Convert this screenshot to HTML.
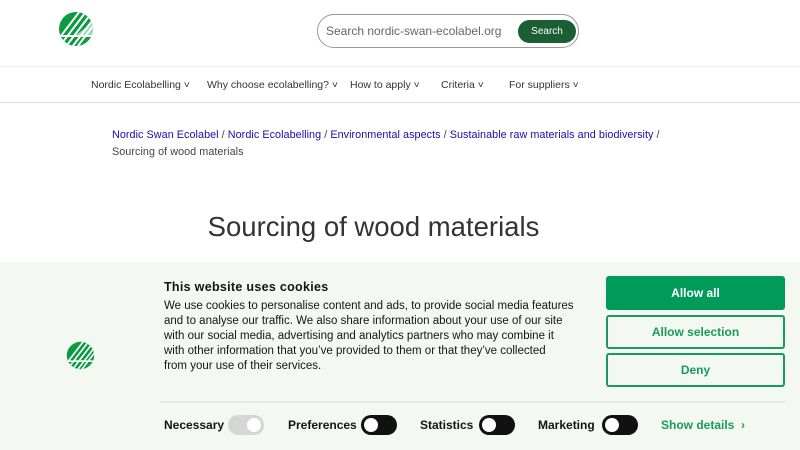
<!DOCTYPE html>
<html><head><meta charset="utf-8"><style>
*{box-sizing:border-box;margin:0;padding:0}
body{width:800px;height:450px;overflow:hidden;background:#fff;font-family:"Liberation Sans",sans-serif;position:relative}
.logo{position:absolute}
.search{position:absolute;left:317px;top:14px;width:262px;height:34px;border:1px solid #999;border-radius:17px}
.search span{position:absolute;left:8px;top:9px;font-size:12px;color:#666}
.search b{position:absolute;right:2px;top:5px;width:58px;height:23px;border-radius:12px;background:#1b5e34;color:#fff;font-weight:normal;font-size:10px;text-align:center;line-height:23px}
.nav{position:absolute;top:66px;left:0;width:800px;height:37px;border-top:1px solid #eee;border-bottom:1px solid #ddd;font-size:10.5px;color:#333}
.nav span{position:absolute;top:12px}
.bc{position:absolute;left:112px;top:127px;font-size:10.8px;line-height:17px;color:#444;width:620px;white-space:nowrap;letter-spacing:.05px}
.bc a{color:#1a0dab;text-decoration:none}
h1{position:absolute;left:0;width:747px;text-align:center;top:211px;font-size:27.5px;font-weight:normal;color:#333}
.ban{position:absolute;left:0;top:262px;width:800px;height:188px;background:#f3f8f2;color:#141414}
.t{position:absolute;left:164px;top:18px;font-size:12.5px;font-weight:bold;letter-spacing:.3px}
.p{position:absolute;left:164px;top:37px;font-size:11.5px;line-height:15px;white-space:nowrap}
.btn{position:absolute;left:606px;width:179px;height:34px;border:2px solid #1a9a5c;border-radius:3px;color:#1a9a5c;font-weight:bold;font-size:12px;text-align:center;line-height:30px}
.hr{position:absolute;left:160px;top:139px;width:625px;border-top:2px solid #e6ebe5}
.lbl{position:absolute;top:156px;font-size:12px;font-weight:bold}
.tg{position:absolute;top:153px;width:36px;height:20px;border-radius:10px;background:#111}
.tg::after{content:"";position:absolute;left:3px;top:3px;width:14px;height:14px;border-radius:50%;background:#fff}
.tg.n{background:#d6d6d6}.tg.n::after{left:19px}
</style></head><body>
<svg class="logo" style="left:58px;top:11px" width="36" height="36" viewBox="0 0 36 36"><defs><clipPath id="c"><circle cx="18" cy="18" r="17"/></clipPath></defs><g clip-path="url(#c)"><rect width="36" height="36" fill="#0a9a3f"/><g stroke="#fff" stroke-width="2"><line x1="-4" y1="34" x2="22" y2="0"/><line x1="1" y1="36" x2="27" y2="2"/><line x1="6" y1="38" x2="32" y2="4"/><line x1="11" y1="40" x2="37" y2="6"/><line x1="16" y1="40" x2="42" y2="6"/></g><polygon points="18,24 36,10 36,24" fill="#fff" opacity=".6"/><rect x="0" y="24" width="36" height="2" fill="#fff"/></g></svg>
<div class="search"><span>Search nordic-swan-ecolabel.org</span><b>Search</b></div>
<div class="nav"><span style="left:91px">Nordic Ecolabelling ˅</span><span style="left:207px">Why choose ecolabelling? ˅</span><span style="left:350px">How to apply ˅</span><span style="left:441px">Criteria ˅</span><span style="left:509px">For suppliers ˅</span></div>
<div class="bc"><a>Nordic Swan Ecolabel</a> / <a>Nordic Ecolabelling</a> / <a>Environmental aspects</a> / <a>Sustainable raw materials and biodiversity</a> /<br>Sourcing of wood materials</div>
<h1>Sourcing of wood materials</h1>
<div class="ban">
<svg class="logo" style="left:66px;top:79px" width="29" height="29" viewBox="0 0 36 36"><defs><clipPath id="c2"><circle cx="18" cy="18" r="17"/></clipPath></defs><g clip-path="url(#c2)"><rect width="36" height="36" fill="#0a9a3f"/><g stroke="#fff" stroke-width="2"><line x1="-4" y1="34" x2="22" y2="0"/><line x1="1" y1="36" x2="27" y2="2"/><line x1="6" y1="38" x2="32" y2="4"/><line x1="11" y1="40" x2="37" y2="6"/><line x1="16" y1="40" x2="42" y2="6"/></g><rect x="0" y="24" width="36" height="2" fill="#fff"/></g></svg>
<div class="t">This website uses cookies</div>
<div class="p">We use cookies to personalise content and ads, to provide social media features<br>and to analyse our traffic. We also share information about your use of our site<br>with our social media, advertising and analytics partners who may combine it<br>with other information that you’ve provided to them or that they’ve collected<br>from your use of their services.</div>
<div class="btn" style="top:14px;background:#009a5a;color:#fff;border-color:#009a5a">Allow all</div>
<div class="btn" style="top:53px">Allow selection</div>
<div class="btn" style="top:91px">Deny</div>
<div class="hr"></div>
<div class="lbl" style="left:164px">Necessary</div><div class="tg n" style="left:228px"></div>
<div class="lbl" style="left:288px">Preferences</div><div class="tg" style="left:361px"></div>
<div class="lbl" style="left:420px">Statistics</div><div class="tg" style="left:479px"></div>
<div class="lbl" style="left:538px">Marketing</div><div class="tg" style="left:602px"></div>
<div class="lbl" style="left:661px;color:#1a9a5c">Show details &nbsp;›</div>
</div>
</body></html>
